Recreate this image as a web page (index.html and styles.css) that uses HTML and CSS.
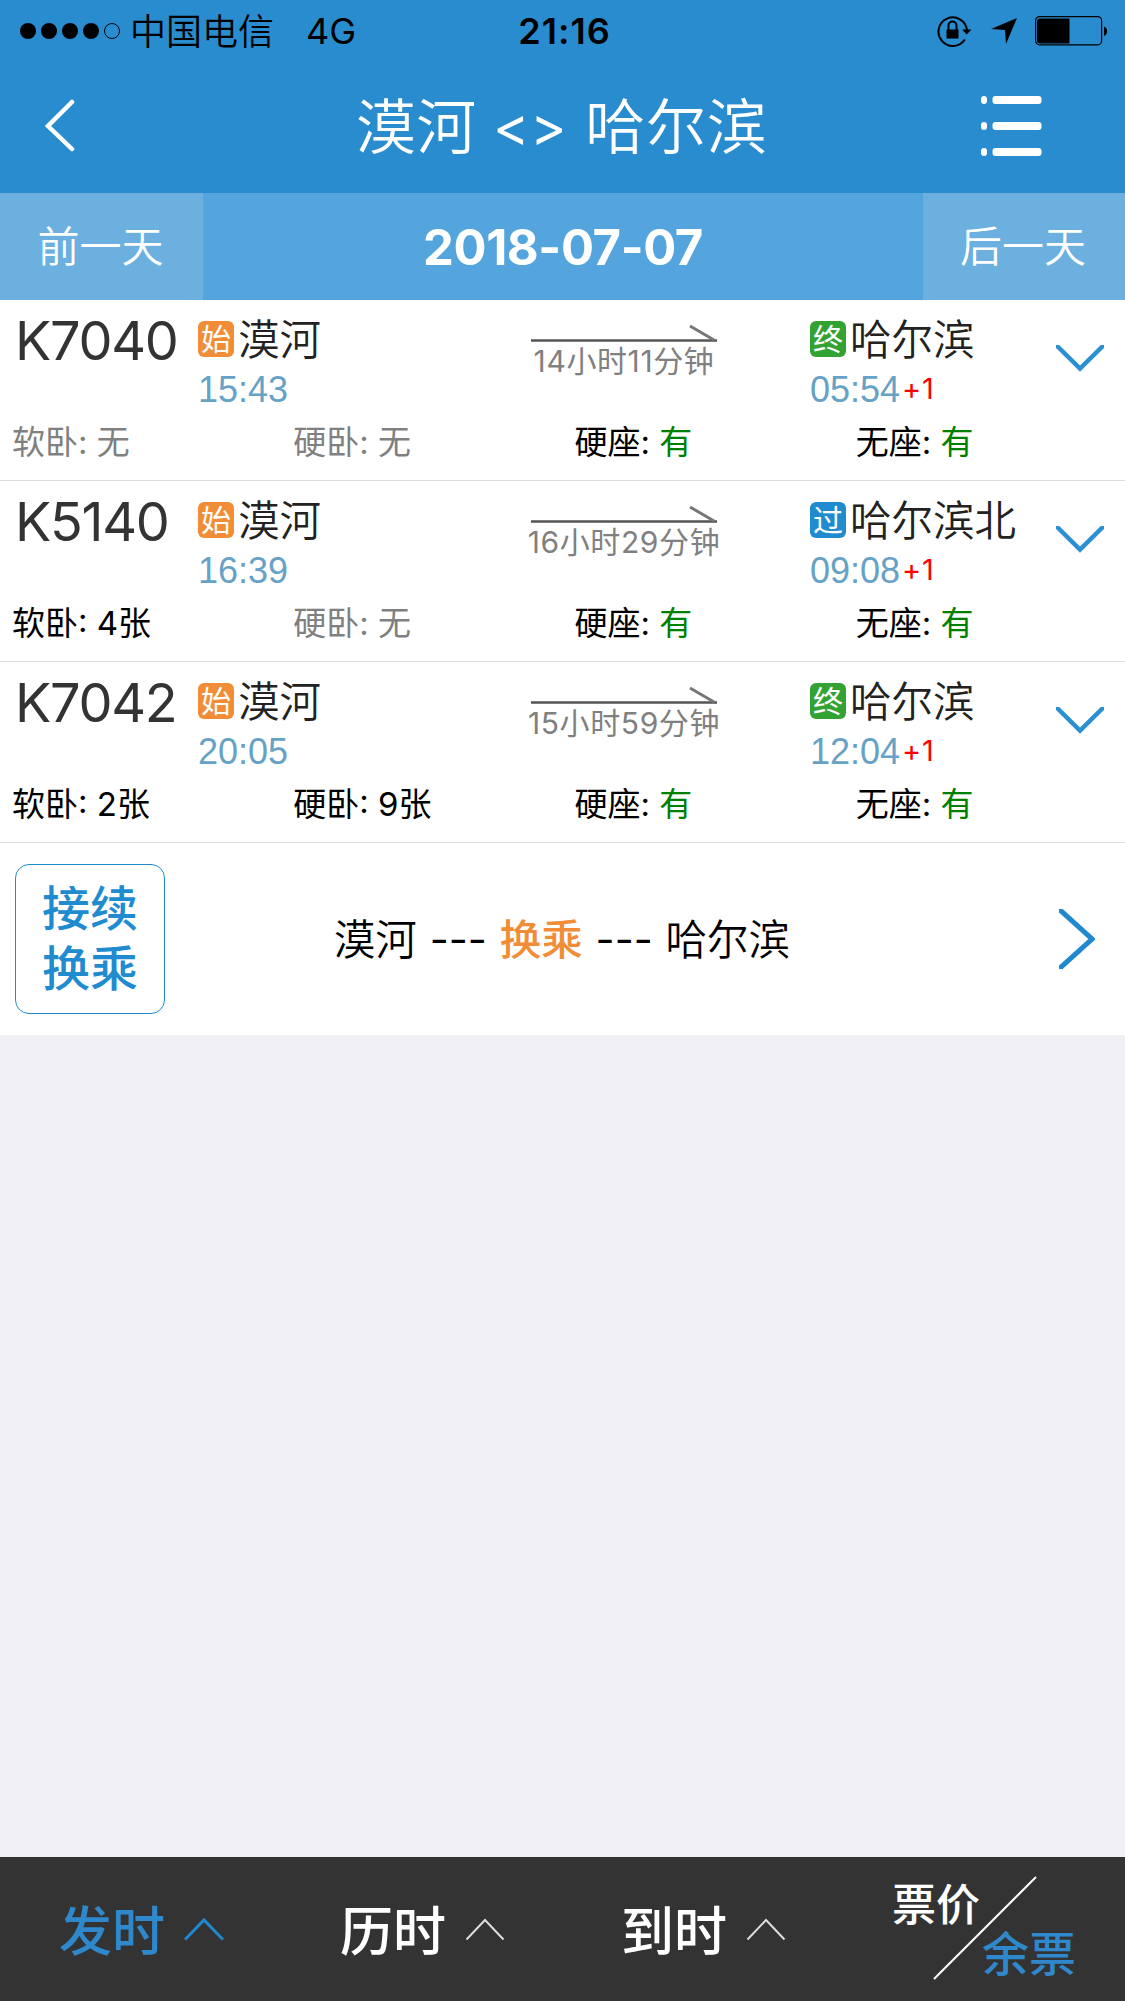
FILE: index.html
```html
<!DOCTYPE html>
<html lang="zh-CN">
<head>
<meta charset="utf-8">
<title>漠河 - 哈尔滨</title>
<link rel="stylesheet" href="styles.css">
</head>
<body>
<div class="app">
  <header class="top">
    <div class="status">
      <div class="status-left">
        <svg class="signal" width="102" height="18" viewBox="0 0 102 18"><circle cx="9" cy="9" r="8"/><circle cx="30" cy="9" r="8"/><circle cx="51" cy="9" r="8"/><circle cx="72" cy="9" r="8"/><circle cx="93" cy="9" r="7.5" fill="none" stroke="#000"/></svg>
        <span class="carrier">中国电信</span>
        <span class="network">4G</span>
      </div>
      <div class="clock">21:16</div>
      <div class="status-right">
        <svg width="36" height="32" viewBox="0 0 36 32"><path d="M27.800 24.500A14.300 14.300 0 1 1 30 15" fill="none" stroke="#000" stroke-width="2"/><path d="M25 14.500h9.500l-4.800 5z"/><path d="M9.500 14.500h12v9h-12z"/><path d="M11.500 15v-4.500a4 4 0 0 1 8 0v4.500" fill="none" stroke="#000" stroke-width="2"/></svg>
        <svg class="locate" width="28" height="28" viewBox="0 0 28 28"><path d="M27 1 16 27 15 13 1 12z"/></svg>
        <svg class="battery" width="75" height="30" viewBox="0 0 75 30"><rect x=".6" y=".6" width="66" height="28.200" rx="4" fill="none" stroke="#000" stroke-width="1.200"/><path d="M5 2.500h29.500v25H5a3 3 0 0 1-3-3v-19a3 3 0 0 1 3-3zM69 10.500a4.500 5 0 0 1 0 9.500z"/></svg>
      </div>
    </div>
    <nav class="nav">
      <svg width="34" height="54" viewBox="0 0 34 54"><path d="M29 4 5 28 29 51" fill="none" stroke="#fff" stroke-width="4.500" stroke-linecap="round"/></svg>
      <h1 class="title"><span>漠河</span><span class="angles">&lt;&gt;</span><span>哈尔滨</span></h1>
      <svg class="menu" width="61" height="60" viewBox="0 0 61 60" fill="#fff"><g id="m"><rect width="6" height="8" rx="3"/><rect x="11.500" width="49" height="8" rx="3"/></g><use href="#m" y="26"/><use href="#m" y="52"/></svg>
    </nav>
  </header>
  <div class="dates">
    <div class="day">前一天</div>
    <div class="date">2018-07-07</div>
    <div class="day">后一天</div>
  </div>
  <main>
    <section class="train">
      <div class="trip">
        <div class="no">K7040</div>
        <div class="stop from"><div class="name"><i class="tag start">始</i>漠河</div><div class="time">15:43</div></div>
        <div class="span"><svg width="188" height="20" viewBox="0 0 188 20"><path d="M1 16.500H187" stroke="#555" stroke-width="2.500"/><path d="M160 2 184 16" stroke="#777" stroke-width="3"/></svg><div class="dur">14小时11分钟</div></div>
        <div class="stop to"><div class="name"><i class="tag end">终</i>哈尔滨</div><div class="time">05:54<b class="plus">+1</b></div></div>
        <svg class="more" width="48" height="27" viewBox="0 0 48 27"><path d="M-2-2 24 23.500 50-2" fill="none" stroke="#2b90d2" stroke-width="4.500"/></svg>
      </div>
      <div class="seats"><span class="none">软卧: 无</span><span class="none">硬卧: 无</span><span>硬座: <em>有</em></span><span>无座: <em>有</em></span></div>
    </section>
    <section class="train">
      <div class="trip">
        <div class="no">K5140</div>
        <div class="stop from"><div class="name"><i class="tag start">始</i>漠河</div><div class="time">16:39</div></div>
        <div class="span"><svg width="188" height="20" viewBox="0 0 188 20"><path d="M1 16.500H187" stroke="#555" stroke-width="2.500"/><path d="M160 2 184 16" stroke="#777" stroke-width="3"/></svg><div class="dur">16小时29分钟</div></div>
        <div class="stop to"><div class="name"><i class="tag via">过</i>哈尔滨北</div><div class="time">09:08<b class="plus">+1</b></div></div>
        <svg class="more" width="48" height="27" viewBox="0 0 48 27"><path d="M-2-2 24 23.500 50-2" fill="none" stroke="#2b90d2" stroke-width="4.500"/></svg>
      </div>
      <div class="seats"><span>软卧: 4张</span><span class="none">硬卧: 无</span><span>硬座: <em>有</em></span><span>无座: <em>有</em></span></div>
    </section>
    <section class="train">
      <div class="trip">
        <div class="no">K7042</div>
        <div class="stop from"><div class="name"><i class="tag start">始</i>漠河</div><div class="time">20:05</div></div>
        <div class="span"><svg width="188" height="20" viewBox="0 0 188 20"><path d="M1 16.500H187" stroke="#555" stroke-width="2.500"/><path d="M160 2 184 16" stroke="#777" stroke-width="3"/></svg><div class="dur">15小时59分钟</div></div>
        <div class="stop to"><div class="name"><i class="tag end">终</i>哈尔滨</div><div class="time">12:04<b class="plus">+1</b></div></div>
        <svg class="more" width="48" height="27" viewBox="0 0 48 27"><path d="M-2-2 24 23.500 50-2" fill="none" stroke="#2b90d2" stroke-width="4.500"/></svg>
      </div>
      <div class="seats"><span>软卧: 2张</span><span>硬卧: 9张</span><span>硬座: <em>有</em></span><span>无座: <em>有</em></span></div>
    </section>
    <section class="transfer">
      <div class="box"><span>接续</span><span>换乘</span></div>
      <div class="route"><span>漠河</span><span class="dash">---</span><strong>换乘</strong><span class="dash">---</span><span>哈尔滨</span></div>
      <svg width="36" height="60" viewBox="0 0 36 60"><path d="M0 0 33 30 0 60" fill="none" stroke="#2088cf" stroke-width="5"/></svg>
    </section>
  </main>
  <footer class="tabs">
    <div class="tab active"><span>发时</span><svg width="40" height="24" viewBox="0 0 40 24"><path d="M1 22.500 20 3 39 22.500" fill="none" stroke="#2088cf" stroke-width="3"/></svg></div>
    <div class="tab"><span>历时</span><svg width="40" height="24" viewBox="0 0 40 24"><path d="M1.500 22.500 20 3 38.500 22.500" fill="none" stroke="#ddd" stroke-width="2"/></svg></div>
    <div class="tab"><span>到时</span><svg width="40" height="24" viewBox="0 0 40 24"><path d="M1.500 22.500 20 3 38.500 22.500" fill="none" stroke="#ddd" stroke-width="2"/></svg></div>
    <div class="switch">
      <span class="price">票价</span>
      <svg width="104" height="104" viewBox="0 0 104 104"><path d="M1 103 103 1" stroke="#fff" stroke-width="2"/></svg>
      <span class="left">余票</span>
    </div>
  </footer>
</div>
</body>
</html>
```
FILE: styles.css
```css
* { box-sizing: border-box; margin: 0; padding: 0; }
body { font-family: Inter, "Noto Sans CJK SC", sans-serif; background: #efeff4; color: #000; }
svg { display: block; flex: none; }
i, em { font-style: normal; }
.app { width: 1125px; height: 2001px; display: flex; flex-direction: column; overflow: hidden; white-space: nowrap; }

.top { height: 193px; background: #298ccf; }
.status { height: 60px; display: grid; grid-template-columns: 1fr auto 1fr; align-items: center; padding: 0 15px 0 19px; }
.status-left, .status-right { display: flex; align-items: center; }
.carrier { font: 350 36px/60px "Noto Sans CJK SC", sans-serif; margin: -4px 0 0 9px; }
.network { font-size: 36px; line-height: 60px; font-weight: 390; margin-left: 32px; }
.clock { font-size: 36px; line-height: 62px; font-weight: 600; letter-spacing: 1px; }
.status-right { justify-content: flex-end; }
.locate { margin-left: 17px; }
.battery { margin-left: 17px; }

.nav { height: 133px; display: flex; align-items: flex-start; justify-content: space-between; padding: 38px 83px 0 43px; }
.title { font: 350 60px/60px "Noto Sans CJK SC", sans-serif; color: #fff; display: flex; margin-left: 65px; margin-top: -5px; letter-spacing: .7px; }
.angles { font: 390 55px/66px Inter, sans-serif; margin: 0 18px 0 16px; }
.menu { margin-top: -2px; }

.dates { height: 107px; display: grid; grid-template-columns: 203px 1fr 202px; background: #54a5dd; color: #fff; text-align: center; line-height: 109px; }
.day { background: #6bb0df; font-family: "Noto Sans CJK SC", sans-serif; font-size: 42px; font-weight: 350; line-height: 101px; padding-right: 2px; }
.date { font-size: 49px; font-weight: 700; letter-spacing: -.4px; }

.train { height: 181px; background: #fff; border-bottom: 1px solid #ddd; }
.trip { height: 113px; display: grid; grid-template-columns: 198px 332px 280px 246px 48px; }
.no { font-size: 54px; line-height: 66px; padding: 8px 0 0 15px; color: #333; letter-spacing: -1.300px; }
.stop { padding-top: 12px; }
.name { font: 350 41.500px/50px "Noto Sans CJK SC", sans-serif; color: #222; display: flex; align-items: center; }
.tag { width: 36px; height: 36px; border-radius: 6px; color: #fff; font-size: 30px; font-weight: 400; line-height: 33px; text-align: center; margin: 4px 4px 0 0; }
.start { background: #f08d36; }
.end { background: #32a332; }
.via { background: #218bd0; }
.time { font: 36px/48px "Liberation Sans", sans-serif; color: #66a2c6; padding-top: 4px; }
.plus { font: 400 29px/30px Inter, sans-serif; color: #f00; margin-left: 2px; vertical-align: 3px; letter-spacing: .8px; }
.span { padding-top: 24px; }
.dur { width: 188px; display: flex; justify-content: center; color: #808080; font-size: 30px; line-height: 35px; font-weight: 390; letter-spacing: .6px; }
.more { margin-top: 45px; }
.seats { display: grid; grid-template-columns: repeat(4, 281.250px); padding-left: 12px; font-size: 33px; line-height: 58px; font-weight: 390; }
.none { color: #808080; }
.seats em { color: #008000; }

.transfer { height: 192px; background: #fff; display: flex; align-items: center; justify-content: space-between; padding: 0 30px 0 15px; }
.box { width: 150px; height: 150px; border: 1px solid #218bd0; border-radius: 14px; color: #218bd0; font: 500 48px/60px "Noto Sans CJK SC", sans-serif; text-align: center; padding-top: 10px; display: grid; grid-template-rows: 60px 60px; }
.route { font: 350 41.500px/60px "Noto Sans CJK SC", sans-serif; display: flex; margin: 0 100px 0 0; }
.route strong { color: #f08d36; font-weight: 500; }
.dash { font-family: Inter, sans-serif; font-weight: 390; margin: 0 12.800px; line-height: 64px; }

.tabs { height: 144px; margin-top: auto; background: #333; display: grid; grid-template-columns: repeat(4, 281px); font: 500 53px/140px "Noto Sans CJK SC", sans-serif; color: #fff; }
.tab { display: flex; align-items: center; padding-left: 59px; gap: 19px; }
.tab span { margin-top: -2px; }
.active { color: #2f88cb; }
.switch { position: relative; padding: 19px 0 0 90px; }
.price, .left { position: absolute; font-size: 44px; line-height: 60px; top: 15px; left: 49px; }
.left { font-size: 47px; color: #2f88cb; top: 64px; left: 139px; }
```
